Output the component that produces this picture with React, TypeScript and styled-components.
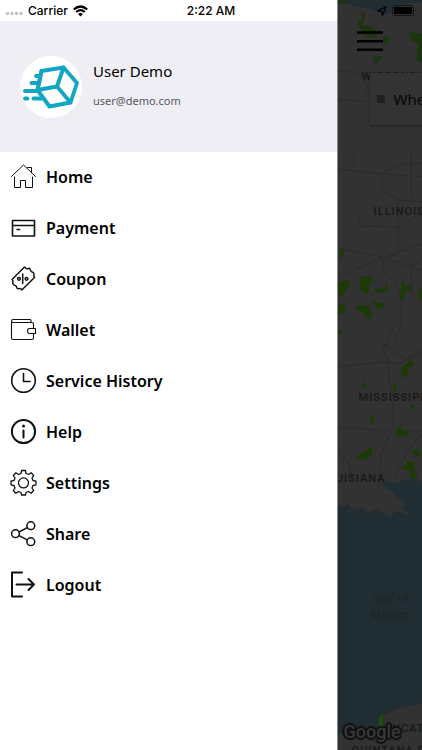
import React from "react";
import styled, { createGlobalStyle } from "styled-components";

const GlobalStyle = createGlobalStyle`
  *, *::before, *::after { box-sizing: border-box; }
  html, body { margin: 0; padding: 0; }
  body { background: #fff; overflow-x: hidden; }
  button { font: inherit; color: inherit; background: none; border: 0; padding: 0; cursor: pointer; }
`;

const Screen = styled.div`
  position: relative;
  display: grid;
  grid-template-columns: 4fr 1fr;
  min-height: 100vh;
  overflow: hidden;
  font-family: "Noto Sans", sans-serif;
  color: #000;
`;

const StatusBar = styled.header`
  position: absolute;
  inset: 0 0 auto;
  z-index: 2;
  display: grid;
  grid-template-columns: 1fr auto 1fr;
  align-items: center;
  height: 21px;
  padding: 0 5px;
  font: 500 12px/20px Inter, sans-serif;
`;

const StatusGroup = styled.div<{ $end?: boolean }>`
  display: flex;
  align-items: center;
  justify-content: ${(p) => (p.$end ? "flex-end" : "flex-start")};
  gap: 5px;
`;

const Drawer = styled.aside`
  background: #fff;
  padding-top: 21px;
  border-right: 1px solid #85858a;
`;

const Profile = styled.section`
  display: flex;
  align-items: center;
  gap: 11px;
  height: 131px;
  padding-left: 20px;
  background: #efeef5;
`;

const Avatar = styled.div`
  display: flex;
  width: 62px;
  height: 62px;
  border-radius: 50%;
  background: #fff;
`;

const ProfileText = styled.div`
  display: flex;
  flex-direction: column;
  gap: 8px;
  padding-bottom: 4px;
`;

const UserName = styled.div`
  font-size: 15px;
  line-height: 24px;
`;

const UserEmail = styled.div`
  font-size: 11px;
  line-height: 20px;
  color: #58585c;
`;

const MenuList = styled.ul`
  list-style: none;
  margin: 0;
  padding: 0;
`;

const MenuLink = styled.a`
  display: flex;
  align-items: center;
  gap: 9px;
  height: 51px;
  padding: 0 0 2px 10px;
  color: #000;
  text-decoration: none;
  font-size: 16px;
  line-height: 24px;
  font-weight: 600;
`;

const MenuIcon = styled.svg<{ $weight: number }>`
  flex: none;
  width: 27px;
  height: 27px;
  fill: none;
  stroke: #111;
  stroke-width: ${(p) => p.$weight};
  stroke-linecap: round;
  stroke-linejoin: round;
`;

const MapPane = styled.main`
  position: relative;
  overflow: hidden;
  padding-top: 28px;
  background: #323232;
`;

const MapArt = styled.svg`
  position: absolute;
  inset: 0;
  width: 100%;
  height: 100%;
`;

const Place = styled.span<{ $x: number; $y: number; $tone?: string }>`
  position: absolute;
  left: ${(p) => p.$x}px;
  top: ${(p) => p.$y}px;
  font: 500 11px/14px Roboto, sans-serif;
  letter-spacing: 1px;
  white-space: nowrap;
  color: #171717;
`;

const WaterName = styled(Place)`
  font: 400 12px/16px Roboto, sans-serif;
  letter-spacing: normal;
  text-align: center;
  white-space: pre;
  color: #1a252a;
`;

const MenuButton = styled.button`
  position: relative;
  display: flex;
  width: 26px;
  height: 26px;
  margin-left: 19px;
`;

const SearchCard = styled.button`
  position: relative;
  display: flex;
  align-items: center;
  gap: 9px;
  width: 340px;
  height: 52px;
  margin: 19px 0 0 32px;
  padding-left: 7px;
  background: #333;
  box-shadow: 0 1px 3px #202020;
  font-size: 15px;
  line-height: 24px;
  color: #050505;
`;

const Marker = styled.span`
  width: 8px;
  height: 8px;
  background: #202020;
`;

const GoogleMark = styled.span`
  position: absolute;
  left: 6px;
  top: 720px;
  font: 500 18px/24px Roboto, sans-serif;
  color: #383838;
  text-shadow: 1px 1px 0 #101010, -1px -1px 0 #101010, 1px -1px 0 #101010, -1px 1px 0 #101010,
    0 2px 1px #101010, 0 -2px 1px #101010, 2px 0 1px #101010, -2px 0 1px #101010;
`;

type Item = { label: string; weight: number; art: React.ReactNode };

const items: Item[] = [
  {
    label: "Home",
    weight: 1,
    art: <path d="M1.500 13.500 13.500 2l12 11.500M4.500 14v10.500h6v-7h5v7h7V14M17.500 4.500h4v5" />,
  },
  {
    label: "Payment",
    weight: 1.6,
    art: <path d="M2.500 6.500h22v15.500h-22zM2.500 11.500h22M7 15.500h2.500" />,
  },
  {
    label: "Coupon",
    weight: 1.5,
    art: (
      <>
        <path d="M14.500 2 2 14.500q1.500 1.200.9 2.700t.6 2.300 2 1.200 1.400 2 2.200.9 2.700 1.400L24.500 12.500q-1-1.500-.6-3t-.9-2.200-1.800-1-1.200-2-2-.7T14.500 2z" />
        <path d="M12.700 9v9.500" />
        <circle cx="9" cy="13.800" r="1.400" />
        <circle cx="16.500" cy="13.800" r="1.400" />
      </>
    ),
  },
  {
    label: "Wallet",
    weight: 1.1,
    art: (
      <>
        <path d="M1.500 5.500V22q0 1.500 1.500 1.500h19q1.500 0 1.500-1.500v-4.500M23.500 12.500V8q0-1.500-1.500-1.500H3q-1.500 0-1.500-1.500T3 3.500h17q1 0 1 1v2" />
        <path d="M19.500 12.500h6v5h-6q-2 0-2-2.500t2-2.500z" />
      </>
    ),
  },
  {
    label: "Service History",
    weight: 1.6,
    art: (
      <>
        <circle cx="13.500" cy="13.500" r="11.800" />
        <path d="M13.500 6.500v8h6.500" />
      </>
    ),
  },
  {
    label: "Help",
    weight: 2,
    art: (
      <>
        <circle cx="13.500" cy="13.500" r="11.600" />
        <path d="M13.500 12.500v7" />
        <circle cx="13.500" cy="8" r="1.500" fill="#111" stroke="none" />
      </>
    ),
  },
  {
    label: "Settings",
    weight: 1.3,
    art: (
      <>
        <path d="M11.600 1.500h3.800l.6 3 2.500 1 2.600-1.700 2.600 2.700-1.700 2.500 1 2.500 3 .6v3.700l-3 .7-1 2.500 1.700 2.500-2.600 2.700-2.600-1.700-2.500 1-.6 2.500h-3.800l-.6-2.500-2.500-1-2.600 1.700L3.300 21.500 5 19l-1-2.500-3-.7v-3.700l3-.6L5 9 3.300 6.500l2.600-2.700L8.500 5.500l2.500-1z" />
        <circle cx="13.500" cy="13.900" r="5" />
      </>
    ),
  },
  {
    label: "Share",
    weight: 1.5,
    art: (
      <>
        <circle cx="5.500" cy="13.700" r="3.900" />
        <circle cx="20.800" cy="5.700" r="3.900" />
        <circle cx="20.800" cy="21.700" r="3.900" />
        <path d="m9 12 8.300-4.400M9 15.600l8.300 4.300" />
      </>
    ),
  },
  {
    label: "Logout",
    weight: 2,
    art: <path d="M12 1.500H2v24h10M6.500 13.500H24M18.500 8 24 13.500l-5.500 5.500" />,
  },
];

function BoxLogo() {
  return (
    <svg viewBox="0 0 62 62" width="62" height="62" role="img" aria-label="Flying box" fill="none" stroke="#13a5c4" strokeWidth="3.900" strokeLinejoin="round" strokeLinecap="round">
      <path d="M21.500 15 43.500 11.500 57 27 50.500 46.500 29.500 50.500 17.500 34z" />
      <path d="M43.500 11.500 37 30.500 50.500 46.500M37 30.500 17.500 34M21.500 15 17.500 34" />
      <path d="M16 20h4M11.500 27H18M5 35H17M5 42.500H7.500M13.500 42.500H23" />
    </svg>
  );
}

function MapDrawing() {
  return (
    <MapArt viewBox="0 0 84 750" preserveAspectRatio="xMinYMin slice" aria-hidden="true">
      <path fill="#202d33" d="M7 0h77v3l-14 0-9 4-4 4-9 3-9-2-9-4-12-1-8-3-10-1z" />
      <path fill="#1c3510" d="M0 0h12L5 3 0 4zM22 12l5 2-1 6-2 5 8 1 6 3v7l-8 2-4-4-3-6-2 1-1-8 5-2zM45 36l6 1-2 7-5-1zM36 55l8 1-3 6-5 1zM70 31l14 3v28l-5-1-1-7 2-9-8-6z" />
      <g fill="none" stroke="#2b2b2c" strokeWidth="1">
        <path d="M0 71h16l8 5 6 13M0 99l29 2M0 169l17 1 26 3 41 3M16 147v20M44 173v18l19 8 21 2M73 150v48M43 173l20-9 21-2M21 217v8l40 1 23-15M60 200v53l-14 3-46-9M46 256l38-13M46 256l38 13M46 256l-2 14 13 9 6 20v22l-6 20M0 275l20-8 24-11M84 256l-11 10v28M58 320 45 348l5 12-50 5M45 342l22 15 17-8M50 360l10 2 24-10M51 360v20l4 15v30l-12 26-3 42M0 425l40 3 44 1M84 430 68 451 55 482M0 450l10 10 4 15" />
      </g>
      <g fill="#1c3908">
        <path d="M3 247l3 3-2 6-3 1zM0 281l11-2v6l-7 10-4 1zM22 275h12v6h-3v11h-5l-4-4zM47 282h2v9H37v-4h10zM63 279l4 5h5v5h-5l-2 11-3-3zM79 287h5v12h-3zM0 303l8 1-2 8-6 1zM18 304h12l2 5 3 4-4 5-5-3v-4l-7-2zM35 300l10 2v6l-8-2zM0 327l4 3-3 4zM70 360l5-2v6l-6 4v7h-6v-9zM23 369l4 5-1 1zM24 380l4 2-1 5-3-1zM55 382h3v6l-3 1zM71 403h6v3h-4zM32 414h4v8h-3zM59 424h4v4h6l1 6-10 1-2-1zM34 444v9l-8 5-10-2 8-5zM73 448h8v7h-4zM69 459l7 1v8l2 2v6h-6v-7l-8-3z" />
      </g>
      <path fill="#202d33" d="M0 501l6 4 4-7 10 1 8 5 12-1 12-4 5-8-10-6-5-4 8-3 8 4 8-5 12-1 6 4v250H0z" />
      <path fill="#323232" d="M0 491l12-2 20 3 16-5 11 8 8 8-5 3 9 5-2 2-11-5-7 7-3-4-6-1-4-4-8 5-6-6-9 2-5-5-10-2z" />
      <path fill="#323232" d="M46 712l14-7 24-5v50H43z" />
      <path fill="#1d4c0c" d="M41 713l4-4v15h-5z" />
    </MapArt>
  );
}

export default function App() {
  return (
    <>
      <GlobalStyle />
      <Screen>
        <StatusBar>
          <StatusGroup>
            <svg width="18" height="10" viewBox="0 0 18 10" fill="#c3c3c3" aria-hidden="true">
              <circle cx="2.500" cy="7.500" r="1.700" /><circle cx="7" cy="7.500" r="1.700" /><circle cx="11.500" cy="7.500" r="1.700" /><circle cx="16" cy="7.500" r="1.700" />
            </svg>
            <span>Carrier</span>
            <svg width="15" height="12" viewBox="0 0 15 12" fill="none" stroke="#000" strokeWidth="2.200" role="img" aria-label="Wi-Fi">
              <path d="M.8 4.500Q7.500-1.500 14.200 4.500M3.200 7q4.300-3.800 8.600 0" />
              <path d="M5 9q2.500-2 5 0l-2.500 2.600z" fill="#000" stroke="none" />
            </svg>
          </StatusGroup>
          <span>2:22 AM</span>
          <StatusGroup $end>
            <svg width="10" height="10" viewBox="0 0 10 10" fill="none" stroke="#000" strokeWidth="1.200" strokeLinejoin="round" role="img" aria-label="Location">
              <path d="M9.200.8.8 4.600l3.800.8.800 3.800z" />
            </svg>
            <svg width="25" height="12" viewBox="0 0 25 12" role="img" aria-label="Battery">
              <rect x=".5" y=".5" width="21" height="10" rx="2.500" fill="none" stroke="#151515" />
              <rect x="2" y="2" width="18" height="7" rx="1" />
              <path d="M23 4q1.500 1.500 0 3z" fill="#151515" />
            </svg>
          </StatusGroup>
        </StatusBar>
        <Drawer>
          <Profile>
            <Avatar><BoxLogo /></Avatar>
            <ProfileText>
              <UserName>User Demo</UserName>
              <UserEmail>user@demo.com</UserEmail>
            </ProfileText>
          </Profile>
          <nav aria-label="Main menu">
            <MenuList>
              {items.map((item) => (
                <li key={item.label}>
                  <MenuLink href="#">
                    <MenuIcon viewBox="0 0 27 27" $weight={item.weight} aria-hidden="true">{item.art}</MenuIcon>
                    {item.label}
                  </MenuLink>
                </li>
              ))}
            </MenuList>
          </nav>
        </Drawer>
        <MapPane>
          <MapDrawing />
          <Place $x={24} $y={70}>WISCONSIN</Place>
          <Place $x={36} $y={205}>ILLINOIS</Place>
          <Place $x={21} $y={391}>MISSISSIPPI</Place>
          <Place $x={-17} $y={472}>LOUISIANA</Place>
          <WaterName $x={33} $y={591}>{"Gulf of\nMexico"}</WaterName>
          <Place $x={48} $y={722}>YUCATAN</Place>
          <Place $x={14} $y={744}>QUINTANA ROO</Place>
          <GoogleMark>Google</GoogleMark>
          <MenuButton type="button" aria-label="Close menu">
            <svg width="26" height="26" viewBox="0 0 26 26" stroke="#000" strokeWidth="2.400" aria-hidden="true">
              <path d="M0 4.500h26M0 13.300h26M0 21.700h26" />
            </svg>
          </MenuButton>
          <SearchCard type="button"><Marker />Where to?</SearchCard>
        </MapPane>
      </Screen>
    </>
  );
}
